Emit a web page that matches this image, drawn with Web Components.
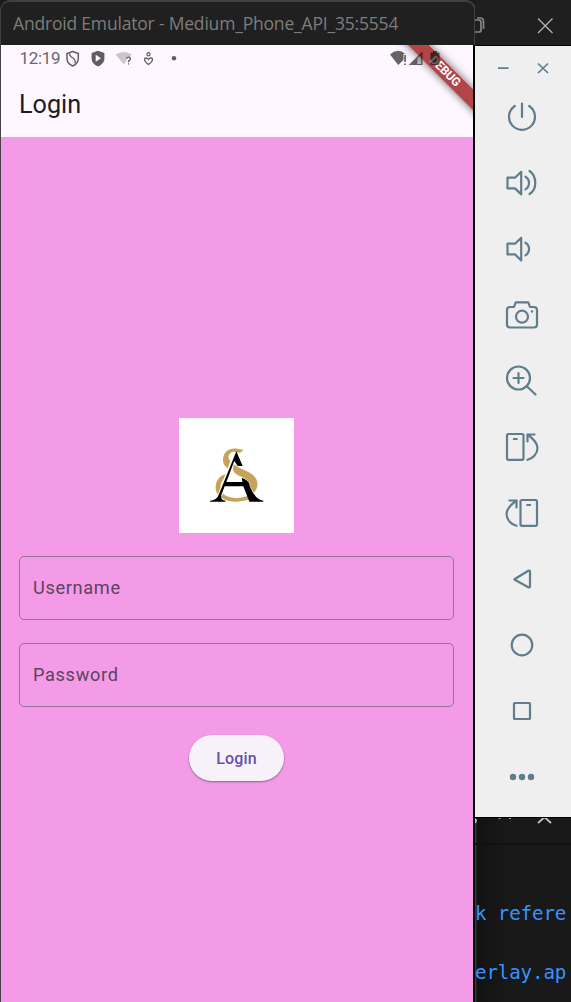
<!DOCTYPE html>
<html lang="en">
<head>
<meta charset="utf-8">
<title>Android Emulator</title>
<style>
html,body{margin:0;height:100%;background:#191919;overflow:hidden}
</style>
</head>
<body>
<emulator-desktop></emulator-desktop>
<script>
const define = (name, html) => customElements.define(name, class extends HTMLElement {
  constructor() {
    super();
    const t = document.createElement('template');
    t.innerHTML = html;
    this.attachShadow({mode: 'open'}).append(t.content.cloneNode(true));
  }
});

const ICONS = {
  power: '<path d="M-7.2-11A13 13 0 1 0 7.2-11M0-13.5V0"/>',
  louder: '<path d="M-14.5-5.3h7.5l6.2-5.9v22.6l-6.2-6H-14.5z"/><path d="M3.5-6.3c4.7 3 4.7 9.7 0 12.7M7.5-12c7.7 5 7.7 18.7 0 23"/>',
  quieter: '<path d="M-14.5-5.3h7.5l6.2-5.9v22.6l-6.2-6H-14.5z"/><path d="M3.5-6.3c4.7 3 4.7 9.7 0 12.7"/>',
  camera: '<path d="M-12-8h4l1.7-4.7H6.3L8-8h4q3 0 3 3V9.5q0 3-3 3h-24q-3 0-3-3V-5q0-3 3-3z"/><circle cy="1.7" r="6"/><circle cx="10" cy="-3.5" r="1.2" fill="currentColor" stroke="none"/>',
  zoom: '<circle cx="-3.5" cy="-3" r="11.5"/><path d="M-8.5-3h10M-3.5-8v10M5 5.5l8.5 8"/>',
  left: '<rect x="-15" y="-13" width="16.5" height="25.8" rx="1.5"/><path d="M-8.2-8h3M5.5-5.5v-7h7M5.5-12.5C11-8.5 15.5-4.5 15.5 1S11 11.5 5.5 12.8"/>',
  right: '<rect x="-1.5" y="-13" width="16.5" height="25.8" rx="1.5"/><path d="M5.2-8h3M-5.5-5.5v-7h-7M-5.5-12.5C-11-8.5-15.5-4.5-15.5 1S-11 11.5-5.5 12.8"/>',
  back: '<path d="M-7.2 0L6.3-8.2q1.7-.7 1.7 1V7.2q0 1.7-1.7 1L-7.2.8q-1-.4 0-.8"/>',
  home: '<circle r="10.3"/>',
  overview: '<rect x="-8" y="-8" width="16" height="16" rx=".8"/>',
  more: '<g fill="currentColor" stroke="none"><circle cx="-9" r="3.2"/><circle r="3.2"/><circle cx="9" r="3.2"/></g>'
};

customElements.define('tool-icon', class extends HTMLElement {
  connectedCallback() {
    this.attachShadow({mode: 'open'}).innerHTML = `
<style>:host{display:block;width:40px;height:40px;color:#607d8b}svg{display:block}</style>
<svg width="40" height="40" viewBox="-20 -20 40 40" fill="none" stroke="currentColor" stroke-width="2.2" stroke-linecap="round" stroke-linejoin="round">${ICONS[this.getAttribute('name')]}</svg>`;
  }
});

define('tool-bar', `
<style>
:host{display:flex;flex-direction:column;box-sizing:border-box;width:96px;height:771px;background:#efefef}
.win{display:flex;height:45px;padding-left:20px}
.win svg{display:block}
.tools{display:flex;flex-direction:column;gap:26px;padding:6px 0 0 27px}
</style>
<div class="win"><svg width="70" height="45" fill="none" stroke="#607d8b" stroke-width="1.7"><path d="M3 22.2h10.5M43 17.5l10 9.5M53 17.5L43 27"/></svg></div>
<div class="tools">
<tool-icon name="power"></tool-icon><tool-icon name="louder"></tool-icon><tool-icon name="quieter"></tool-icon><tool-icon name="camera"></tool-icon><tool-icon name="zoom"></tool-icon><tool-icon name="left"></tool-icon><tool-icon name="right"></tool-icon><tool-icon name="back"></tool-icon><tool-icon name="home"></tool-icon><tool-icon name="overview"></tool-icon><tool-icon name="more"></tool-icon>
</div>`);

define('title-bar', `
<style>
:host{display:block;box-sizing:border-box;height:45px;border:solid #414141;border-width:2px 2px 0 1px;border-radius:10px 10px 0 0;background:#202020;color:#7d7d7d;
font:17.5px/42px "Open Sans","Noto Sans",sans-serif;padding-left:12px;white-space:nowrap;letter-spacing:-.19px}
</style><slot></slot>`);

define('status-bar', `
<style>
:host{display:flex;position:relative;z-index:1;height:28px;color:#6a666c;font:17px/27px Roboto,sans-serif;padding-left:18.5px}
span{width:42.5px;letter-spacing:-.3px;white-space:nowrap}
svg{display:block}
.system{margin-left:206px}
</style>
<span>12:19</span>
<svg width="120" height="28" fill="none" stroke="#5f5c62">
<path stroke-width="1.5" d="M10.7 6.5l5.6 2v5q0 5-5.6 7.5Q5 18.5 5 13.5v-5z"/><path stroke-width="1.3" d="M7.5 8.500q0 2.500 3.500 4.500 3 2 2 5.500"/>
<path fill="#5f5c62" stroke="none" d="M36 5.700L42.400 8v5.500q0 5.200-6.400 8-6.400-2.800-6.400-8V8z"/>
<path fill="#fef7ff" stroke="none" d="M33.700 9.800l5.200 3.500-5.200 3.500z"/>
<path fill="#cbc5cc" stroke="none" d="M53.500 9.500q8.500-5 16 0l-1 2q-4 0-4 4l-2.500 4z"/>
<path stroke-width="1.3" d="M64.500 13.700q.5-1.600 2.200-1.500 2 .3 1.600 2-.3 1-1.700 1.800v1.300M66.600 18.200v1.300"/>
<circle cx="86.500" cy="9.300" r="1.600" stroke-width="1.200"/><path stroke-width="1.300" d="M82.500 14.500q0-1.500 1.600-1.500 1.400 0 2.400 1.500 1-1.500 2.400-1.500 1.600 0 1.600 1.500 0 2-4 5-4-3-4-5z"/>
<circle cx="112" cy="13.200" r="2.200" fill="#5f5c62" stroke="none"/>
</svg>
<svg class="system" width="60" height="28" fill="#000" fill-opacity=".6">
<path d="M2 9.500Q9.500 2.500 17.500 9h-2v6L10.200 20z"/><path d="M16.200 10h1.700v7h-1.700zM16.200 18.400h1.700V20h-1.700z"/>
<path fill-rule="evenodd" d="M20.700 20L34.500 6.500V20zM29.500 13v6h3.700V9.500z"/><path fill-opacity=".2" d="M29.500 13v6h3.700V9.500z"/>
<path d="M45 6h4v1.500h1.500q1 0 1 1V19q0 1-1 1h-7q-1 0-1-1V8.500q0-1 1-1H45z"/>
</svg>`);

define('debug-ribbon', `
<style>
:host{position:absolute;right:0;top:0;width:90px;height:90px;overflow:hidden;pointer-events:none}
div{position:absolute;left:-8.5px;top:19px;width:140px;height:14.5px;transform:rotate(45deg);background:#a5282bdc;box-shadow:0 0 8px #0009;
color:#fff;font:bold 12px/15px Roboto,sans-serif;text-align:center;letter-spacing:-.2px}
</style><div><slot></slot></div>`);

define('app-bar', `
<style>:host{display:block;height:63.5px;padding-left:18px;font:25.2px/63px Roboto,sans-serif;color:#1d1b20}</style><slot></slot>`);

define('brand-logo', `
<style>:host{display:block;width:115px;height:115px;background:#fff}svg{display:block}</style>
<svg width="115" height="115" viewBox="27 24 345 345">
<path fill="#c7a25a" d="M220 117C213 134 206 127 192 125C177 126 172 140 178 149C182 155 186 158 192 161L180 180C167 172 159 163 159 149C160 122 180 113 202 116Q214 120 220 117z"/>
<path fill="#c7a25a" d="M166 192L161 208C146 222 150 248 169 258Q196 271 234 258L239 267C201 282 163 276 145 256C129 235 137 201 166 192z"/>
<path fill="none" stroke="#fff" stroke-width="13" d="M190 148L150 256"/>
<path fill="#000" d="M199 124L218 168H203L193 153L169 216H222V229H164L154 255Q149 269 166 272V275H120V272Q138 270 145 257z"/>
<path fill="#000" d="M215 205H236L249 246Q259 268 280 272V275H238L220 229z"/>
<path fill="#c7a25a" stroke="#fff" stroke-width="2" d="M192 161C209 178 248 182 260 208C268 225 261 240 251 250L240 228C242 214 222 204 205 197C190 190 183 179 192 161z"/>
</svg>`);

define('text-field', `
<style>:host{display:block;box-sizing:border-box;height:64.5px;border:1.5px solid #94719a;border-radius:5px;padding-left:13px;font:18.2px/62px Roboto,sans-serif;letter-spacing:.65px;color:#5a4460}</style><slot></slot>`);

define('pill-button', `
<style>:host{display:block;width:95px;height:46px;border-radius:23px;background:#f7f2fa;box-shadow:0 1px 2px #0006;color:#6750a4;font:500 16px/47px Roboto,sans-serif;text-align:center;letter-spacing:.1px}</style><slot></slot>`);

define('phone-window', `
<style>
:host{display:flex;flex-direction:column;height:1002px}
.screen{position:relative;flex:1;display:flex;flex-direction:column;background:#fef7ff;border-left:1px solid #454045;border-right:2px solid #000}
title-bar{margin-right:-1px}
main{flex:1;display:flex;flex-direction:column;align-items:center;background:#f39be6;padding:281.5px 19px 0 18px}
text-field{align-self:stretch}
.user{margin-top:22.5px}.pass{margin-top:22.8px}
pill-button{margin-top:27.9px}
</style>
<title-bar>Android Emulator - Medium_Phone_API_35:5554</title-bar>
<div class="screen">
<status-bar></status-bar>
<app-bar>Login</app-bar>
<main><brand-logo></brand-logo><text-field class="user">Username</text-field><text-field class="pass">Password</text-field><pill-button>Login</pill-button></main>
<debug-ribbon>DEBUG</debug-ribbon>
</div>`);

define('window-controls', `
<style>:host{display:block;height:45px;background:#1f1f1f;border-bottom:1px solid #000}svg{display:block}</style>
<svg width="96" height="45" fill="none" stroke="#858585" stroke-width="1.7"><path d="M0 20h3.500q2.500 0 2.500 2.500V30q0 2-2 2H0M2 18h3q3.500 0 3.500 3.500V29"/><path stroke="#b4b4b4" stroke-width="1.3" d="M63 18.500L77.500 33M77.500 18.500L63 33"/></svg>`);

define('code-pane', `
<style>
:host{display:block;height:184px;border-top:1px solid #000;background:linear-gradient(90deg,#333b39 0 1px,#121212 2px,#191919 35px);color:#3794ff;overflow:hidden}
svg{display:block}
header{height:25px;border-bottom:2px solid #111}
p{margin:0;height:59px;font:19.2px/59px "DejaVu Sans Mono",monospace;white-space:pre;letter-spacing:-.15px}
.first{margin-top:39px}
</style>
<header><svg width="96" height="25" fill="none" stroke="#c8c8c8" stroke-width="1.7"><path d="M0 1q2 1 0 4M23.500 0h2M34 0h2M63 5l5.500-5h2l5.500 5"/></svg></header>
<p class="first">k refere</p><p>erlay.ap</p>`);

define('emulator-desktop', `
<style>:host{display:grid;grid-template-columns:475px 96px;width:571px;height:1002px;overflow:hidden;background:#191919}.side{display:flex;flex-direction:column}</style>
<phone-window></phone-window>
<div class="side"><window-controls></window-controls><tool-bar></tool-bar><code-pane></code-pane></div>`);
</script>
</body>
</html>
